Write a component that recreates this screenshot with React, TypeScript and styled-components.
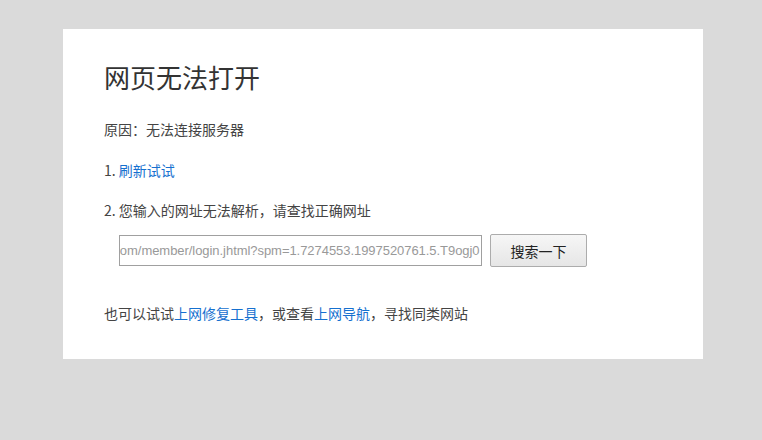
import React, { useEffect, useRef } from 'react';
import styled, { createGlobalStyle } from 'styled-components';

const GlobalStyle = createGlobalStyle`
    html, body {
        margin: 0;
        padding: 0;
        background: #dadada;
    }
    body {
        font-family: "Noto Sans CJK SC", "Liberation Sans", sans-serif;
        color: #444;
    }
`;

const Page = styled.div`
    width: 762px;
    height: 440px;
    padding-top: 29px;
    box-sizing: border-box;
`;

const Card = styled.div`
    width: 640px;
    margin-left: 63px;
    background: #fff;
    padding: 30px 40px 36px 41px;
    box-sizing: border-box;
`;

const Title = styled.h1`
    margin: 0;
    font-size: 26px;
    line-height: 36px;
    font-weight: normal;
    color: #333;
`;

const Line = styled.p<{ $gap: number }>`
    margin: ${props => props.$gap}px 0 0;
    font-size: 14px;
    line-height: 20px;
    color: #444;
`;

const TextLink = styled.a`
    color: #1670cf;
    text-decoration: none;
`;

const SearchRow = styled.div`
    display: flex;
    align-items: center;
    gap: 8px;
    margin: 14px 0 0 15px;
    height: 33px;
`;

const UrlInput = styled.input`
    width: 363px;
    height: 31px;
    box-sizing: border-box;
    border: 1px solid #a0a0a0;
    border-radius: 0;
    outline: none;
    padding: 0 1px 0 0;
    margin: 0;
    font-family: "Liberation Sans", Arial, sans-serif;
    font-size: 13px;
    letter-spacing: -0.05px;
    color: #999;
    background: #fff;
`;

const SearchButton = styled.button`
    width: 97px;
    height: 33px;
    box-sizing: border-box;
    border: 1px solid #acacac;
    border-radius: 2px;
    background: linear-gradient(#f6f6f6, #e6e6e6);
    font-family: "Noto Sans CJK SC", sans-serif;
    font-size: 14px;
    color: #222;
    padding: 0;
`;

const URL = 'https://login.taobao.com/member/login.jhtml?spm=1.7274553.1997520761.5.T9ogj0';

const App = () => {
    const inputRef = useRef<HTMLInputElement>(null);

    useEffect(() => {
        // the field shows the end of the address, as after typing it
        const el = inputRef.current;
        if (el) el.scrollLeft = el.scrollWidth;
    }, []);

    return (
        <Page>
            <GlobalStyle />
            <Card>
                <Title>网页无法打开</Title>
                <Line $gap={24}>原因：无法连接服务器</Line>
                <Line $gap={21}>1. <TextLink href="#">刷新试试</TextLink></Line>
                <Line $gap={20}>2. 您输入的网址无法解析，请查找正确网址</Line>
                <SearchRow>
                    <UrlInput ref={inputRef} defaultValue={URL} readOnly />
                    <SearchButton>搜索一下</SearchButton>
                </SearchRow>
                <Line $gap={36}>
                    也可以试试<TextLink href="#">上网修复工具</TextLink>，或查看<TextLink href="#">上网导航</TextLink>，寻找同类网站
                </Line>
            </Card>
        </Page>
    );
};

export default App;
